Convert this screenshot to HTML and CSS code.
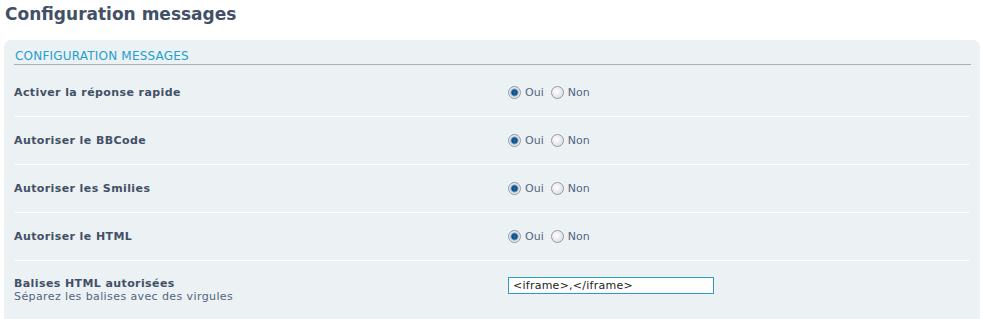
FILE: index.html
```html
<!DOCTYPE html>
<html lang="fr">
<head>
    <meta charset="UTF-8" />
    <title>Configuration messages</title>
    <link rel="stylesheet" href="styles.css">
</head>
<body>
    <h1>Configuration messages</h1>

    <form class="panel">
        <fieldset>
            <legend>Configuration messages</legend>

            <dl>
                <dt><label>Activer la réponse rapide</label></dt>
                <dd>
                    <label class="choice"><input type="radio" name="quick_reply" checked /> Oui</label>
                    <label class="choice"><input type="radio" name="quick_reply" /> Non</label>
                </dd>
            </dl>
            <dl>
                <dt><label>Autoriser le BBCode</label></dt>
                <dd>
                    <label class="choice"><input type="radio" name="bbcode" checked /> Oui</label>
                    <label class="choice"><input type="radio" name="bbcode" /> Non</label>
                </dd>
            </dl>
            <dl>
                <dt><label>Autoriser les Smilies</label></dt>
                <dd>
                    <label class="choice"><input type="radio" name="smilies" checked /> Oui</label>
                    <label class="choice"><input type="radio" name="smilies" /> Non</label>
                </dd>
            </dl>
            <dl>
                <dt><label>Autoriser le HTML</label></dt>
                <dd>
                    <label class="choice"><input type="radio" name="html" checked /> Oui</label>
                    <label class="choice"><input type="radio" name="html" /> Non</label>
                </dd>
            </dl>
            <dl class="last">
                <dt>
                    <label>Balises HTML autorisées</label>
                    <span class="explain">Séparez les balises avec des virgules</span>
                </dt>
                <dd><input type="text" class="inputbox" value="&lt;iframe&gt;,&lt;/iframe&gt;" /></dd>
            </dl>
        </fieldset>
    </form>
</body>
</html>
```

FILE: styles.css
```css
body {
    margin: 0;
    background: #fff;
    font-family: "DejaVu Sans", Verdana, sans-serif;
    font-size: 11px;
    color: #425067;
}
h1 {
    margin: 0;
    padding: 4px 0 0 5px;
    height: 36px;
    font-size: 17px;
    font-weight: bold;
    color: #425067;
}
.panel {
    margin: 0 2px 0 4px;
    padding: 0 10px;
    background: #ecf1f3;
    border-radius: 7px;
    height: 290px;
    overflow: hidden;
}
fieldset {
    margin: 0;
    padding: 9px 0 0;
    border: none;
}
legend {
    float: left;
    width: 100%;
    padding: 0 0 1px 1px;
    margin-bottom: 4px;
    border-bottom: 1px solid #a8b2bc;
    color: #1ea0d0;
    font-size: 12px;
    letter-spacing: 0.2px;
    text-transform: uppercase;
}
dl {
    clear: both;
    display: flex;
    align-items: center;
    margin: 0;
    height: 47px;
    border-bottom: 1px solid #fff;
    letter-spacing: 0.4px;
}
dl.last {
    height: 58px;
    border-bottom: none;
}
dt {
    width: 494px;
    font-weight: bold;
}
dt .explain {
    display: block;
    font-weight: normal;
    color: #536482;
}
dd {
    margin: 0;
    display: flex;
    align-items: center;
    gap: 7px;
    color: #536482;
    letter-spacing: 0;
}
.last dd {
    align-self: flex-start;
    margin-top: 16px;
}
.choice {
    display: flex;
    align-items: center;
    gap: 4px;
}
input[type=radio] {
    appearance: none;
    margin: 0;
    width: 13px;
    height: 13px;
    border-radius: 50%;
    border: 1px solid #8f9aa6;
    background: radial-gradient(circle at 40% 40%, #ffffff, #d6d6d6);
}
input[type=radio]:checked {
    background: radial-gradient(circle, #2b6fa8 0, #0d4a7e 2.5px, #7fa3c1 3.5px, #e2e6ea 4.5px, #f4f4f4 100%);
}
.inputbox {
    width: 206px;
    height: 17px;
    box-sizing: border-box;
    margin: 0;
    padding: 0 4px;
    border: 1px solid #2f9bc4;
    font-family: "DejaVu Sans", Verdana, sans-serif;
    font-size: 11px;
    letter-spacing: 0.25px;
    color: #222;
    background: #fff;
}
```
